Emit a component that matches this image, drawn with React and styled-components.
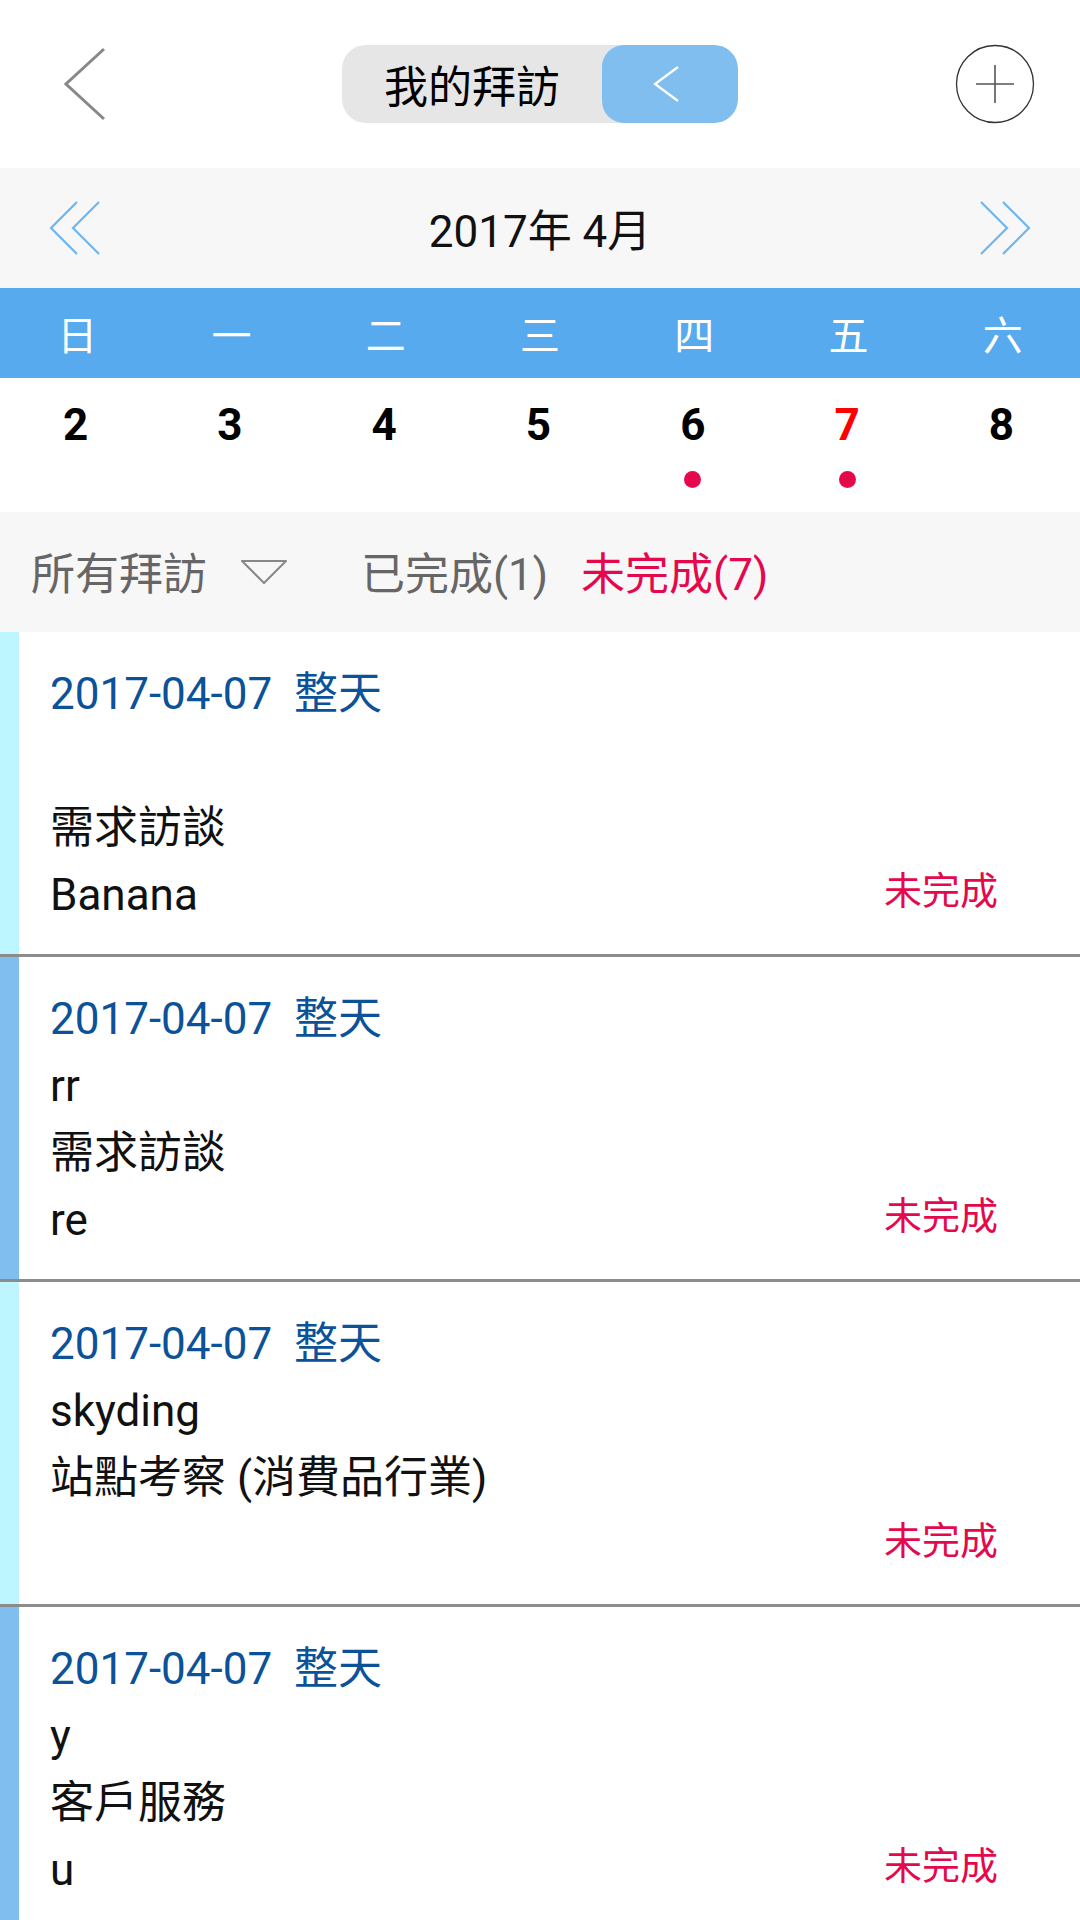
import React from 'react'
import styled, { createGlobalStyle } from 'styled-components'

const GlobalStyle = createGlobalStyle`
  body {
    margin: 0;
    background: #fff;
    font-family: Roboto, "Noto Sans CJK TC", sans-serif;
  }
`

const Page = styled.div`
  width: 1080px;
  height: 1920px;
  overflow: hidden;
  background: #fff;
`

const Header = styled.header`
  height: 168px;
  display: grid;
  grid-template-columns: 1fr auto 1fr;
  align-items: center;
  padding: 0 45px;
  box-sizing: border-box;
`

const IconButton = styled.div`
  display: flex;
  justify-content: ${p => (p.$end ? 'flex-end' : 'flex-start')};
  align-items: center;
  padding-left: ${p => (p.$end ? 0 : 19)}px;
`

const Segment = styled.div`
  display: flex;
  width: 396px;
  height: 78px;
  background: #e6e6e6;
  border-radius: 24px;
  overflow: hidden;
`

const SegmentLabel = styled.div`
  flex: 1;
  display: flex;
  align-items: center;
  justify-content: center;
  font-size: 44px;
  color: #000;
`

const SegmentToggle = styled.div`
  width: 136px;
  display: flex;
  align-items: center;
  justify-content: center;
  padding-right: 6px;
  box-sizing: border-box;
  background: #80bef0;
  border-radius: 22px;
`

const MonthBar = styled.div`
  height: 120px;
  background: #f7f7f7;
  display: flex;
  align-items: center;
  justify-content: space-between;
  padding: 0 49px;
`

const MonthTitle = styled.div`
  font-size: 44px;
  color: #111;
`

const WeekBar = styled.div`
  height: 90px;
  background: #58aaee;
  display: grid;
  grid-template-columns: repeat(7, 1fr);
  align-items: center;
`

const WeekDay = styled.div`
  text-align: center;
  color: #fff;
  font-size: 40px;
`

const DateRow = styled.div`
  height: 134px;
  display: grid;
  grid-template-columns: repeat(7, 1fr);
`

const DateCell = styled.div`
  display: flex;
  flex-direction: column;
  align-items: center;
  padding-top: 21px;
  padding-right: 3px;
`

const DateNum = styled.div`
  font-size: 44px;
  font-weight: 700;
  line-height: 52px;
  color: ${p => (p.$today ? '#ff0000' : '#000')};
`

const Dot = styled.div`
  width: 17px;
  height: 17px;
  margin-top: 20px;
  border-radius: 50%;
  background: ${p => (p.$show ? '#e5094c' : 'transparent')};
`

const FilterBar = styled.div`
  height: 120px;
  background: #f7f7f7;
  display: flex;
  align-items: center;
  padding-left: 31px;
  padding-bottom: 3px;
  box-sizing: border-box;
  font-size: 44px;
  color: #666;
`

const FilterTab = styled.span`
  margin-left: ${p => p.$gap || 0}px;
  color: ${p => (p.$active ? '#e3094c' : '#666')};
`

const Caret = styled.svg`
  margin-left: 33px;
  margin-top: 2px;
`

const Item = styled.div`
  display: flex;
  border-bottom: 3px solid #8c8c8c;
`

const Stripe = styled.div`
  width: 19px;
  flex-shrink: 0;
  background: ${p => p.$color};
`

const ItemBody = styled.div`
  flex: 1;
  display: flex;
  padding: 29px 82px 25px 31px;
`

const Lines = styled.div`
  flex: 1;
  font-size: 44px;
  line-height: 67px;
  color: #111;
`

const DateLine = styled.div`
  color: #0b5299;
  white-space: pre;
`

const Line = styled.div`
  height: 67px;
`

const Status = styled.div`
  align-self: flex-end;
  font-size: 38px;
  line-height: 67px;
  margin-bottom: 4px;
  color: #e3094c;
`

const BackIcon = () => (
  <svg width="42" height="74" viewBox="0 0 42 74">
    <path d="M40 2 L2 37 L40 72" fill="none" stroke="#888" strokeWidth="3" />
  </svg>
)

const PlusIcon = () => (
  <svg width="80" height="80" viewBox="0 0 80 80">
    <circle cx="40" cy="40" r="38.5" fill="none" stroke="#333" strokeWidth="1.3" />
    <path d="M21 40 H59 M40 21 V59" stroke="#555" strokeWidth="1.6" />
  </svg>
)

const SmallBack = () => (
  <svg width="28" height="38" viewBox="0 0 28 38">
    <path d="M25 2 L2 19 L25 36" fill="none" stroke="#fff" strokeWidth="2.2" />
  </svg>
)

const DoubleChevron = ({ flip }) => (
  <svg width="54" height="58" viewBox="0 0 54 58" style={flip ? { transform: 'scaleX(-1)' } : undefined}>
    <path d="M28 3 L2 29 L28 55 M50 3 L24 29 L50 55" fill="none" stroke="#6db5f0" strokeWidth="2.2" />
  </svg>
)

const weekDays = ['日', '一', '二', '三', '四', '五', '六']
const dates = [
  { n: 2 }, { n: 3 }, { n: 4 }, { n: 5 },
  { n: 6, dot: true },
  { n: 7, dot: true, today: true },
  { n: 8 },
]

const visits = [
  { stripe: '#bdf6ff', lines: ['', '需求訪談', 'Banana'] },
  { stripe: '#80bef0', lines: ['rr', '需求訪談', 're'] },
  { stripe: '#bdf6ff', lines: ['skyding', '站點考察 (消費品行業)', ''] },
  { stripe: '#80bef0', lines: ['y', '客戶服務', 'u'] },
]

export default function App() {
  return (
    <Page>
      <GlobalStyle />
      <Header>
        <IconButton><BackIcon /></IconButton>
        <Segment>
          <SegmentLabel>我的拜訪</SegmentLabel>
          <SegmentToggle><SmallBack /></SegmentToggle>
        </Segment>
        <IconButton $end><PlusIcon /></IconButton>
      </Header>

      <MonthBar>
        <DoubleChevron />
        <MonthTitle>2017年 4月</MonthTitle>
        <DoubleChevron flip />
      </MonthBar>

      <WeekBar>
        {weekDays.map(d => <WeekDay key={d}>{d}</WeekDay>)}
      </WeekBar>

      <DateRow>
        {dates.map(d => (
          <DateCell key={d.n}>
            <DateNum $today={d.today}>{d.n}</DateNum>
            <Dot $show={d.dot} />
          </DateCell>
        ))}
      </DateRow>

      <FilterBar>
        <FilterTab>所有拜訪</FilterTab>
        <Caret width="48" height="28" viewBox="0 0 48 28">
          <path d="M2 3 H46 L24 25 Z" fill="none" stroke="#888" strokeWidth="2" strokeLinejoin="round" />
        </Caret>
        <FilterTab $gap={73}>已完成(1)</FilterTab>
        <FilterTab $gap={33} $active>未完成(7)</FilterTab>
      </FilterBar>

      {visits.map((v, i) => (
        <Item key={i}>
          <Stripe $color={v.stripe} />
          <ItemBody>
            <Lines>
              <DateLine>{'2017-04-07  整天'}</DateLine>
              {v.lines.map((l, j) => <Line key={j}>{l}</Line>)}
            </Lines>
            <Status>未完成</Status>
          </ItemBody>
        </Item>
      ))}
    </Page>
  )
}
